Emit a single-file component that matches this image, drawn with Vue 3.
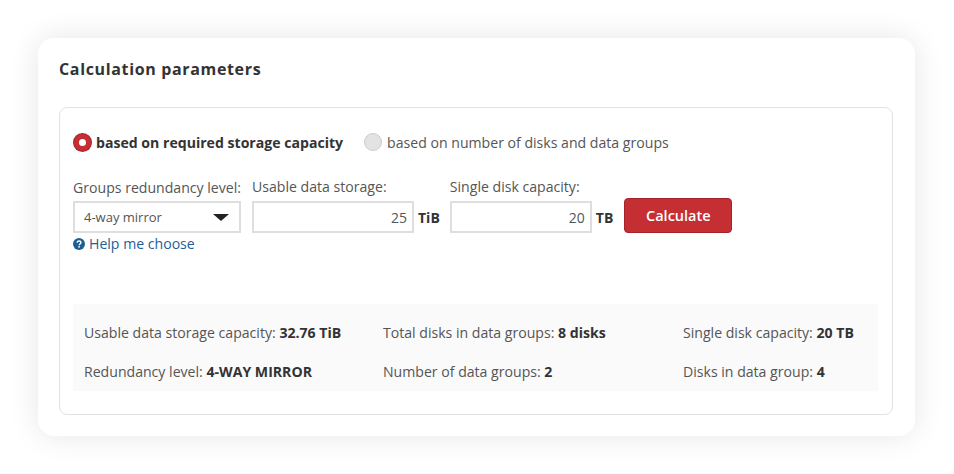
<script setup>
import { ref } from 'vue';

const mode = ref('capacity');

const results = [
  [
    { label: 'Usable data storage capacity:', value: '32.76 TiB' },
    { label: 'Redundancy level:', value: '4-WAY MIRROR' },
  ],
  [
    { label: 'Total disks in data groups:', value: '8 disks' },
    { label: 'Number of data groups:', value: '2' },
  ],
  [
    { label: 'Single disk capacity:', value: '20 TB' },
    { label: 'Disks in data group:', value: '4' },
  ],
];
</script>

<template>
  <div class="page">
    <div class="card">
      <h2>Calculation parameters</h2>
      <div class="panel">
        <div class="modes">
          <label class="mode" :class="{ active: mode === 'capacity' }" @click="mode = 'capacity'">
            <span class="radio"></span>
            based on required storage capacity
          </label>
          <label class="mode" :class="{ active: mode === 'disks' }" @click="mode = 'disks'">
            <span class="radio"></span>
            based on number of disks and data groups
          </label>
        </div>

        <div class="fields">
          <div class="field level">
            <label>Groups redundancy level:</label>
            <div class="select">
              <span>4-way mirror</span>
              <span class="arrow"></span>
            </div>
            <a class="help">
              <svg width="12" height="12" viewBox="0 0 12 12">
                <circle cx="6" cy="6" r="6" fill="#1d5f95" />
                <path d="M4.1 4.7C4.2 3.6 5 3 6 3c1.1 0 1.9.7 1.9 1.6 0 .8-.5 1.2-1.1 1.6-.4.3-.6.5-.6.9v.2" fill="none" stroke="#fff" stroke-width="1.4" />
                <rect x="5.3" y="8.1" width="1.6" height="1.5" fill="#fff" />
              </svg>
              Help me choose
            </a>
          </div>
          <div class="field">
            <label>Usable data storage:</label>
            <div class="with-unit">
              <input class="storage" type="text" value="25" />
              <b>TiB</b>
            </div>
          </div>
          <div class="field">
            <label>Single disk capacity:</label>
            <div class="with-unit">
              <input class="disk" type="text" value="20" />
              <b>TB</b>
            </div>
          </div>
          <button type="button">Calculate</button>
        </div>

        <div class="results">
          <div v-for="(col, i) in results" :key="i" class="col">
            <div v-for="item in col" :key="item.label">
              {{ item.label }} <b>{{ item.value }}</b>
            </div>
          </div>
        </div>
      </div>
    </div>
  </div>
</template>

<style>
html,
body {
  margin: 0;
  background: #fff;
}
</style>

<style scoped>
.page {
  width: 954px;
  height: 474px;
  padding: 38px 39px 38px 38px;
  box-sizing: border-box;
  font-family: "Open Sans", sans-serif;
  font-size: 14.1px;
  color: #555;
  overflow: hidden;
}

.card {
  height: 398px;
  box-sizing: border-box;
  padding: 20px 22px 21px 21px;
  background: #fff;
  border-radius: 16px;
  box-shadow: 0 0 30px rgba(0, 0, 0, 0.1);
}

h2 {
  margin: 0 0 27px;
  font-size: 16px;
  line-height: 22px;
  font-weight: 700;
  letter-spacing: 0.65px;
  color: #333;
}

.panel {
  height: 308px;
  box-sizing: border-box;
  padding: 23px 14px 23px 13px;
  border: 1px solid #e2e2e2;
  border-radius: 8px;
}

.modes {
  display: flex;
  gap: 21px;
  height: 22px;
}

.mode {
  display: flex;
  align-items: center;
  gap: 5px;
  cursor: pointer;
}

.mode.active {
  font-weight: 700;
  color: #333;
}

.radio {
  width: 18px;
  height: 18px;
  box-sizing: border-box;
  border-radius: 50%;
  background: #e3e3e3;
  border: 1px solid #ccc;
}

.active .radio {
  background: #fff;
  border: 5px solid #c52f33;
  box-shadow: 0 0 0 1px #a5242a;
  width: 17px;
  height: 17px;
  margin: 0 0.5px;
}

.fields {
  display: flex;
  align-items: flex-start;
  margin-top: 22px;
  height: 129px;
}

.field {
  display: flex;
  flex-direction: column;
  margin-right: 11px;
}

.field:nth-child(2) {
  margin-right: 10px;
}

.field label {
  line-height: 22px;
  margin-top: 1px;
  margin-bottom: 3px;
}

.field.level label {
  margin-top: 2px;
  margin-bottom: 2px;
}

.select {
  width: 168px;
  height: 32px;
  box-sizing: border-box;
  display: flex;
  align-items: center;
  justify-content: space-between;
  padding: 0 10px 0 9px;
  border: 2px solid #dedede;
  font-size: 13px;
}

.arrow {
  border-left: 8px solid transparent;
  border-right: 8px solid transparent;
  border-top: 7px solid #222;
}

.help {
  display: flex;
  align-items: center;
  gap: 4px;
  line-height: 22px;
  color: #1d5f95;
}

.with-unit {
  display: flex;
  align-items: center;
  gap: 4px;
  height: 32px;
  color: #333;
  font-size: 14px;
}

input {
  height: 32px;
  box-sizing: border-box;
  padding: 0 5px;
  border: 2px solid #dedede;
  background: #fff;
  outline: none;
  text-align: right;
  font-family: inherit;
  font-size: 14px;
  color: #555;
}

.storage {
  width: 162px;
}

.disk {
  width: 142px;
}

button {
  width: 108px;
  height: 35px;
  margin-top: 23px;
  border: 1px solid #a5242a;
  border-radius: 4px;
  background: #c52f33;
  color: #fff;
  font-family: inherit;
  font-size: 14.5px;
  font-weight: 600;
  cursor: pointer;
}

.results {
  display: grid;
  grid-template-columns: 299px 300px 1fr;
  height: 87px;
  box-sizing: border-box;
  padding: 18px 11px 8px;
  background: #fafafa;
}

.col {
  display: flex;
  flex-direction: column;
  justify-content: space-between;
  line-height: 22px;
}

.col b {
  color: #333;
}
</style>
